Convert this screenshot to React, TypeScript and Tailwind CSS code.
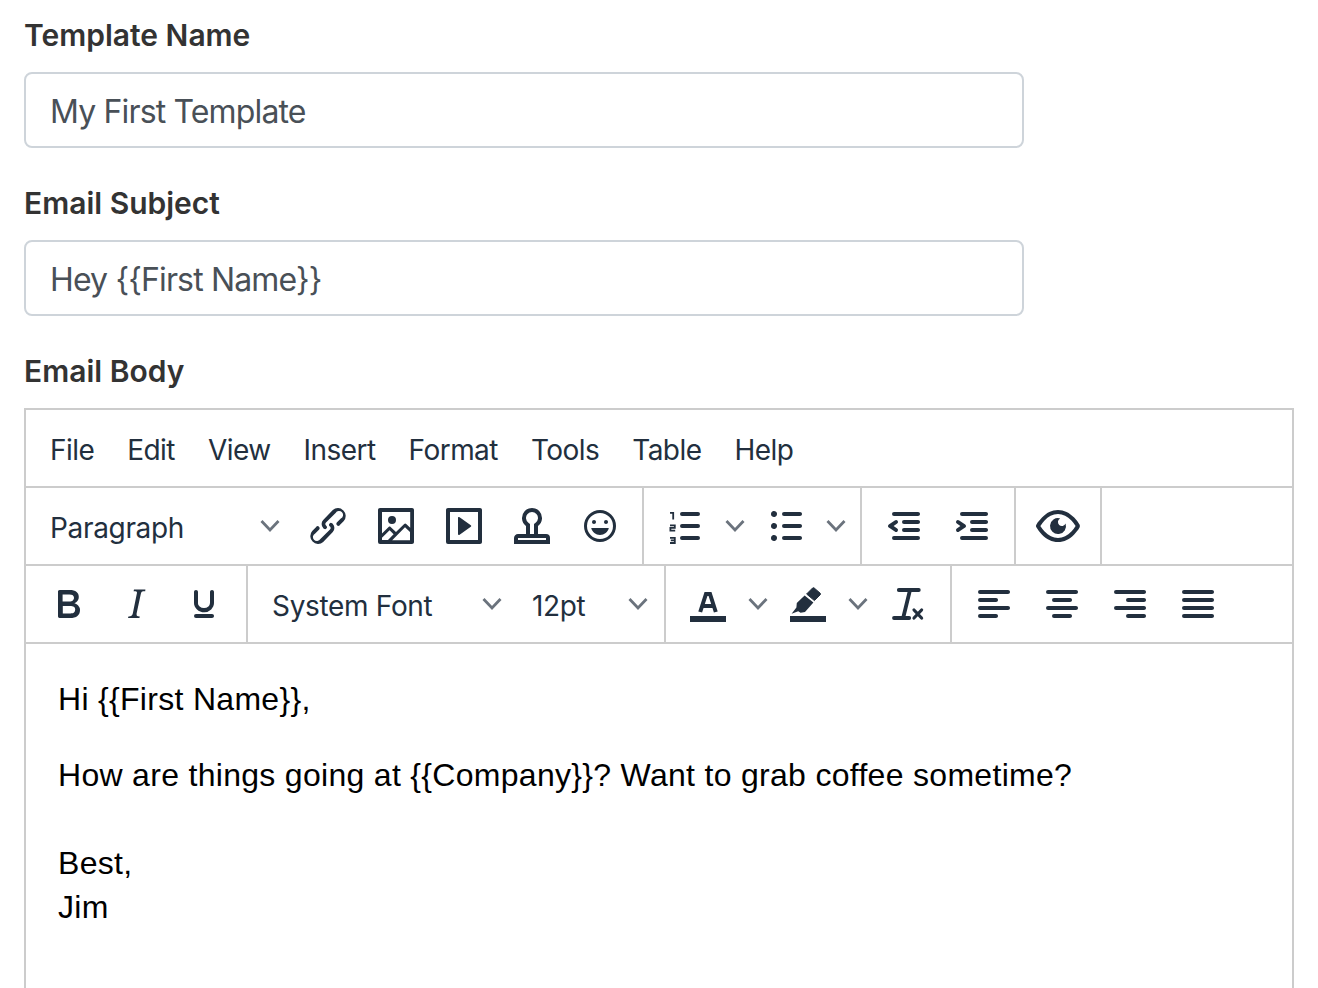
import type { ReactNode } from 'react';

const ICONS: Record<string, string> = {
  bold: 'M7.8 19c-.3 0-.5 0-.6-.2l-.2-.5V5.7c0-.2 0-.4.2-.5l.6-.2h5c1.5 0 2.7.3 3.5 1 .7.6 1.1 1.4 1.1 2.5a3 3 0 0 1-.6 1.9c-.4.6-1 1-1.6 1.2.4.1.9.3 1.3.6s.8.7 1 1.2c.4.4.5 1 .5 1.6 0 1.3-.4 2.3-1.3 3-.8.7-2.1 1-3.8 1H7.8zm5-8.3c.6 0 1.2-.1 1.6-.5.4-.3.6-.7.6-1.3 0-1.1-.8-1.7-2.3-1.7H9.3v3.5h3.4zm.5 6c.7 0 1.3-.1 1.7-.4.4-.4.6-.9.6-1.5s-.2-1-.7-1.4c-.4-.3-1-.4-2-.4H9.4v3.8h4z',
  italic: 'M16.7 4.7l-.1.9h-.3c-.6 0-1 0-1.4.3-.3.3-.4.6-.5 1.1l-2.1 9.8v.6c0 .5.4.8 1.4.8h.2l-.2.8H8l.2-.8h.2c1.1 0 1.8-.5 2-1.5l2-9.8.1-.5c0-.6-.4-.8-1.4-.8h-.3l.2-.9h5.8z',
  underline: 'M16 5c.6 0 1 .4 1 1v5.5a4 4 0 0 1-.4 1.8l-1 1.4a5.3 5.3 0 0 1-5.5 1 5 5 0 0 1-1.6-1c-.5-.4-.8-.9-1.1-1.4a4 4 0 0 1-.4-1.8V6c0-.6.4-1 1-1s1 .4 1 1v5.5c0 .3 0 .6.2 1l.6.7a3.3 3.3 0 0 0 2.2.8 3.4 3.4 0 0 0 2.2-.8c.3-.2.4-.5.6-.8l.2-.9V6c0-.6.4-1 1-1zM8 17h8c.6 0 1 .4 1 1s-.4 1-1 1H8a1 1 0 0 1 0-2z',
  link: 'M6.2 12.3a1 1 0 0 1 1.4 1.4l-2 2a2 2 0 1 0 2.6 2.8l4.8-4.8a1 1 0 0 0 0-1.4 1 1 0 1 1 1.4-1.3 2.9 2.9 0 0 1 0 4L9.6 20a3.9 3.9 0 0 1-5.5-5.5l2-2zm11.6-.6a1 1 0 0 1-1.4-1.4l2-2a2 2 0 1 0-2.6-2.8L11 10.3a1 1 0 0 0 0 1.4A1 1 0 1 1 9.6 13a2.9 2.9 0 0 1 0-4L14.4 4a3.9 3.9 0 0 1 5.5 5.5l-2 2z',
  image: 'M5 15.7l3.3-3.2c.3-.3.7-.3 1 0L12 15l4.1-4c.3-.4.8-.4 1 0l2 1.9V5H5v10.7zM5 18V19h3l2.8-2.9-2-2L5 17.9zm14-3l-2.5-2.4-6.4 6.5H19v-4zM4 3h16c.6 0 1 .4 1 1v16c0 .6-.4 1-1 1H4a1 1 0 0 1-1-1V4c0-.6.4-1 1-1zm6 8a2 2 0 1 0 0-4 2 2 0 0 0 0 4z',
  embed: 'M4 3h16c.6 0 1 .4 1 1v16c0 .6-.4 1-1 1H4a1 1 0 0 1-1-1V4c0-.6.4-1 1-1zm1 2v14h14V5H5zm4.8 2.6l5.6 4a.5.5 0 0 1 0 .8l-5.6 4A.5.5 0 0 1 9 16V8a.5.5 0 0 1 .8-.4z',
  stamp: 'M19 19v-1H5v1h14zM9 16v-4a5 5 0 1 1 6 0v4h4a2 2 0 0 1 2 2v3H3v-3c0-1.1.9-2 2-2h4zm4 0v-5l.8-.6a3 3 0 1 0-3.6 0l.8.6v5h2z',
  emoji: 'M9 11c.6 0 1-.4 1-1s-.4-1-1-1a1 1 0 0 0-1 1c0 .6.4 1 1 1zm6 0c.6 0 1-.4 1-1s-.4-1-1-1a1 1 0 0 0-1 1c0 .6.4 1 1 1zm-3 5.5c2.1 0 4-1.5 4.4-3.5H7.6c.5 2 2.3 3.5 4.4 3.5zM12 4a8 8 0 1 0 0 16 8 8 0 0 0 0-16zm0 14.5a6.5 6.5 0 1 1 0-13 6.5 6.5 0 0 1 0 13z',
  bullist: 'M11 5h8c.6 0 1 .4 1 1s-.4 1-1 1h-8a1 1 0 0 1 0-2zm0 6h8c.6 0 1 .4 1 1s-.4 1-1 1h-8a1 1 0 0 1 0-2zm0 6h8c.6 0 1 .4 1 1s-.4 1-1 1h-8a1 1 0 0 1 0-2zM4.5 6c0-.4.1-.8.4-1 .3-.4.7-.5 1.1-.5.4 0 .8.1 1 .4.4.3.5.7.5 1.1 0 .4-.1.8-.4 1-.3.4-.7.5-1.1.5-.4 0-.8-.1-1-.4-.4-.3-.5-.7-.5-1.1zm0 6c0-.4.1-.8.4-1 .3-.4.7-.5 1.1-.5.4 0 .8.1 1 .4.4.3.5.7.5 1.1 0 .4-.1.8-.4 1-.3.4-.7.5-1.1.5-.4 0-.8-.1-1-.4-.4-.3-.5-.7-.5-1.1zm0 6c0-.4.1-.8.4-1 .3-.4.7-.5 1.1-.5.4 0 .8.1 1 .4.4.3.5.7.5 1.1 0 .4-.1.8-.4 1-.3.4-.7.5-1.1.5-.4 0-.8-.1-1-.4-.4-.3-.5-.7-.5-1.1z',
  outdent: 'M7 5h12c.6 0 1 .4 1 1s-.4 1-1 1H7a1 1 0 1 1 0-2zm5 4h7c.6 0 1 .4 1 1s-.4 1-1 1h-7a1 1 0 0 1 0-2zm0 4h7c.6 0 1 .4 1 1s-.4 1-1 1h-7a1 1 0 0 1 0-2zm-5 4h12a1 1 0 0 1 0 2H7a1 1 0 0 1 0-2zm1.6-3.8a1 1 0 0 1-1.2 1.6l-3-2a1 1 0 0 1 0-1.6l3-2a1 1 0 0 1 1.2 1.6L6.8 12l1.8 1.2z',
  indent: 'M7 5h12c.6 0 1 .4 1 1s-.4 1-1 1H7a1 1 0 1 1 0-2zm5 4h7c.6 0 1 .4 1 1s-.4 1-1 1h-7a1 1 0 0 1 0-2zm0 4h7c.6 0 1 .4 1 1s-.4 1-1 1h-7a1 1 0 0 1 0-2zm-5 4h12a1 1 0 0 1 0 2H7a1 1 0 0 1 0-2zm-2.6-3.8L6.2 12l-1.8-1.2a1 1 0 0 1 1.2-1.6l3 2a1 1 0 0 1 0 1.6l-3 2a1 1 0 1 1-1.2-1.6z',
  preview: 'M3.5 12.5c.5.8 1.1 1.6 1.8 2.3 2 2 4.2 3.2 6.7 3.2s4.7-1.2 6.7-3.2a16.2 16.2 0 0 0 2.1-2.8 15.7 15.7 0 0 0-2.1-2.8c-2-2-4.2-3.2-6.7-3.2a9.3 9.3 0 0 0-6.7 3.2A16.2 16.2 0 0 0 3.2 12c0 .2.2.3.3.5zm-2.4-1l.7-1.2L4 7.8C6.2 5.4 8.9 4 12 4c3 0 5.8 1.4 8.1 3.8a18.2 18.2 0 0 1 2.8 3.7v1l-.7 1.2-2.1 2.5c-2.3 2.4-5 3.8-8.1 3.8-3 0-5.8-1.4-8.1-3.8a18.2 18.2 0 0 1-2.8-3.7 1 1 0 0 1 0-1zm12-3.3a2 2 0 1 0 2.7 2.6 4 4 0 1 1-2.7-2.6z',
  alignleft: 'M5 5h14c.6 0 1 .4 1 1s-.4 1-1 1H5a1 1 0 1 1 0-2zm0 4h8c.6 0 1 .4 1 1s-.4 1-1 1H5a1 1 0 1 1 0-2zm0 8h8c.6 0 1 .4 1 1s-.4 1-1 1H5a1 1 0 0 1 0-2zm0-4h14c.6 0 1 .4 1 1s-.4 1-1 1H5a1 1 0 0 1 0-2z',
  aligncenter: 'M5 5h14c.6 0 1 .4 1 1s-.4 1-1 1H5a1 1 0 1 1 0-2zm3 4h8c.6 0 1 .4 1 1s-.4 1-1 1H8a1 1 0 1 1 0-2zm0 8h8c.6 0 1 .4 1 1s-.4 1-1 1H8a1 1 0 0 1 0-2zm-3-4h14c.6 0 1 .4 1 1s-.4 1-1 1H5a1 1 0 0 1 0-2z',
  alignright: 'M5 5h14c.6 0 1 .4 1 1s-.4 1-1 1H5a1 1 0 1 1 0-2zm6 4h8c.6 0 1 .4 1 1s-.4 1-1 1h-8a1 1 0 0 1 0-2zm0 8h8c.6 0 1 .4 1 1s-.4 1-1 1h-8a1 1 0 0 1 0-2zm-6-4h14c.6 0 1 .4 1 1s-.4 1-1 1H5a1 1 0 0 1 0-2z',
  alignjustify: 'M5 5h14c.6 0 1 .4 1 1s-.4 1-1 1H5a1 1 0 1 1 0-2zm0 4h14c.6 0 1 .4 1 1s-.4 1-1 1H5a1 1 0 1 1 0-2zm0 4h14c.6 0 1 .4 1 1s-.4 1-1 1H5a1 1 0 0 1 0-2zm0 4h14c.6 0 1 .4 1 1s-.4 1-1 1H5a1 1 0 0 1 0-2z',
};

// these few are redrawn by hand to follow the reference strokes
const DRAWN: Record<string, ReactNode> = {
  numlist: (
    <>
      <path d="M11 6h8M11 12h8M11 18h8" fill="none" stroke="#222f3e" strokeWidth="2" strokeLinecap="round" />
      <path
        d="M5 5.4h1.6v3.3M5 11.7h2.4v1.2H5.2v1.4h2.4M5 17.9h2.4v2.6H5M5.4 19.2h2"
        fill="none"
        stroke="#222f3e"
        strokeWidth="0.9"
      />
    </>
  ),
  textcolor: (
    <>
      <rect x="3" y="18" width="18" height="3" />
      <path d="M8.1 16L11 7h2l2.9 9M9.3 13h5.4" fill="none" stroke="#222f3e" strokeWidth="2" />
    </>
  ),
  highlight: (
    <>
      <rect x="3" y="18" width="18" height="3" />
      <path d="M11.3 7l3-3a.6.6 0 0 1 .8 0l3 2.6a.6.6 0 0 1 0 .8l-2.9 2.9z" stroke="#222f3e" strokeWidth="0.5" strokeLinejoin="round" />
      <path d="M10.3 7.8l4.4 3.5-4.2 4.7-2.2.4-1.2-.8-3.3 1.3 2.4-3.2.2-2.2z" />
    </>
  ),
  removeformat: (
    <>
      <path d="M7.4 5h10M13 5l-3.3 13.5M5 19h7.6" fill="none" stroke="#222f3e" strokeWidth="1.9" strokeLinecap="round" />
      <path d="M15 15l3.8 4M18.8 15L15 19" fill="none" stroke="#222f3e" strokeWidth="1.6" strokeLinecap="round" />
    </>
  ),
};

const Icon = ({ name }: { name: string }) => (
  <svg viewBox="0 0 24 24" className="w-12 h-12 fill-[#222f3e]">
    {DRAWN[name] ?? <path d={ICONS[name]} />}
  </svg>
);

const Chevron = () => (
  <svg viewBox="0 0 20 14" className="w-5 h-[14px]">
    <path d="M1.5 2 L10 11 L18.5 2" fill="none" stroke="#6b737d" strokeWidth="2.8" />
  </svg>
);

const Btn = ({ name, width = 'w-[68px]' }: { name: string; width?: string }) => (
  <button className={`${width} h-[60px] flex items-center justify-center`}>
    <Icon name={name} />
  </button>
);

const ChevBtn = ({ width }: { width: string }) => (
  <button className={`${width} h-[60px] flex items-center justify-center`}>
    <Chevron />
  </button>
);

const Select = ({ label, width, chevPad }: { label: string; width: string; chevPad: string }) => (
  <button className={`${width} ${chevPad} h-[60px] pl-4 flex items-center justify-between text-[28px] tracking-[-0.33px] text-[#222f3e]`}>
    <span className="pt-1">{label}</span>
    <Chevron />
  </button>
);

const Group = ({ children, className = 'px-2' }: { children: ReactNode; className?: string }) => (
  <div className={`flex items-center border-r-2 border-[#cccccc] ${className}`}>{children}</div>
);

const Field = ({ label, value }: { label: string; value: string }) => (
  <div className="mb-8">
    <label className="block h-12 mb-3 leading-[46px] text-[30px] font-semibold text-[#333333]">{label}</label>
    <input
      readOnly
      value={value}
      className="block w-[1000px] h-[76px] px-6 pt-[2px] text-[32px] tracking-[-0.85px] text-[#495057] bg-white border-2 border-[#ced4da] rounded-lg outline-none"
    />
  </div>
);

export default function App() {
  return (
    <div className="h-screen overflow-hidden bg-white pt-3 pl-6 font-['Inter','Liberation_Sans',sans-serif]">
      <Field label="Template Name" value="My First Template" />
      <Field label="Email Subject" value="Hey {{First Name}}" />
      <label className="block h-12 mb-3 leading-[46px] text-[30px] font-semibold text-[#333333]">Email Body</label>

      <div className="w-[1270px] h-[700px] border-2 border-[#cccccc]">
        <div className="h-[78px] pl-6 pt-1 flex items-center gap-[33px] border-b-2 border-[#cccccc] text-[28px] tracking-[-0.55px] text-[#222f3e]">
          <span>File</span>
          <span>Edit</span>
          <span>View</span>
          <span>Insert</span>
          <span>Format</span>
          <span>Tools</span>
          <span>Table</span>
          <span>Help</span>
        </div>

        <div className="h-[78px] flex border-b-2 border-[#cccccc]">
          <Group>
            <Select label="Paragraph" width="w-[260px]" chevPad="pr-[14px]" />
            <Btn name="link" />
            <Btn name="image" />
            <Btn name="embed" />
            <Btn name="stamp" />
            <Btn name="emoji" />
          </Group>
          <Group className="pl-2 pr-[6px]">
            <Btn name="numlist" width="w-[64px]" />
            <ChevBtn width="w-[38px]" />
            <Btn name="bullist" width="w-[64px]" />
            <ChevBtn width="w-9" />
          </Group>
          <Group>
            <Btn name="outdent" />
            <Btn name="indent" />
          </Group>
          <Group>
            <Btn name="preview" />
          </Group>
        </div>

        <div className="h-[78px] flex border-b-2 border-[#cccccc]">
          <Group>
            <Btn name="bold" />
            <Btn name="italic" />
            <Btn name="underline" />
          </Group>
          <Group>
            <Select label="System Font" width="w-[260px]" chevPad="pr-[14px]" />
            <Select label="12pt" width="w-[140px]" chevPad="pr-2" />
          </Group>
          <Group>
            <Btn name="textcolor" />
            <ChevBtn width="w-8" />
            <Btn name="highlight" />
            <ChevBtn width="w-8" />
            <Btn name="removeformat" />
          </Group>
          <div className="flex items-center px-2">
            <Btn name="alignleft" />
            <Btn name="aligncenter" />
            <Btn name="alignright" />
            <Btn name="alignjustify" />
          </div>
        </div>

        <div className="pt-[33px] px-8 text-[32px] leading-[44px] tracking-[0.3px] text-black font-['Liberation_Sans',sans-serif]">
          <p className="mb-8">Hi {'{{First Name}}'},</p>
          <p className="mb-11">How are things going at {'{{Company}}'}? Want to grab coffee sometime?</p>
          <p>Best,</p>
          <p>Jim</p>
        </div>
      </div>
    </div>
  );
}
